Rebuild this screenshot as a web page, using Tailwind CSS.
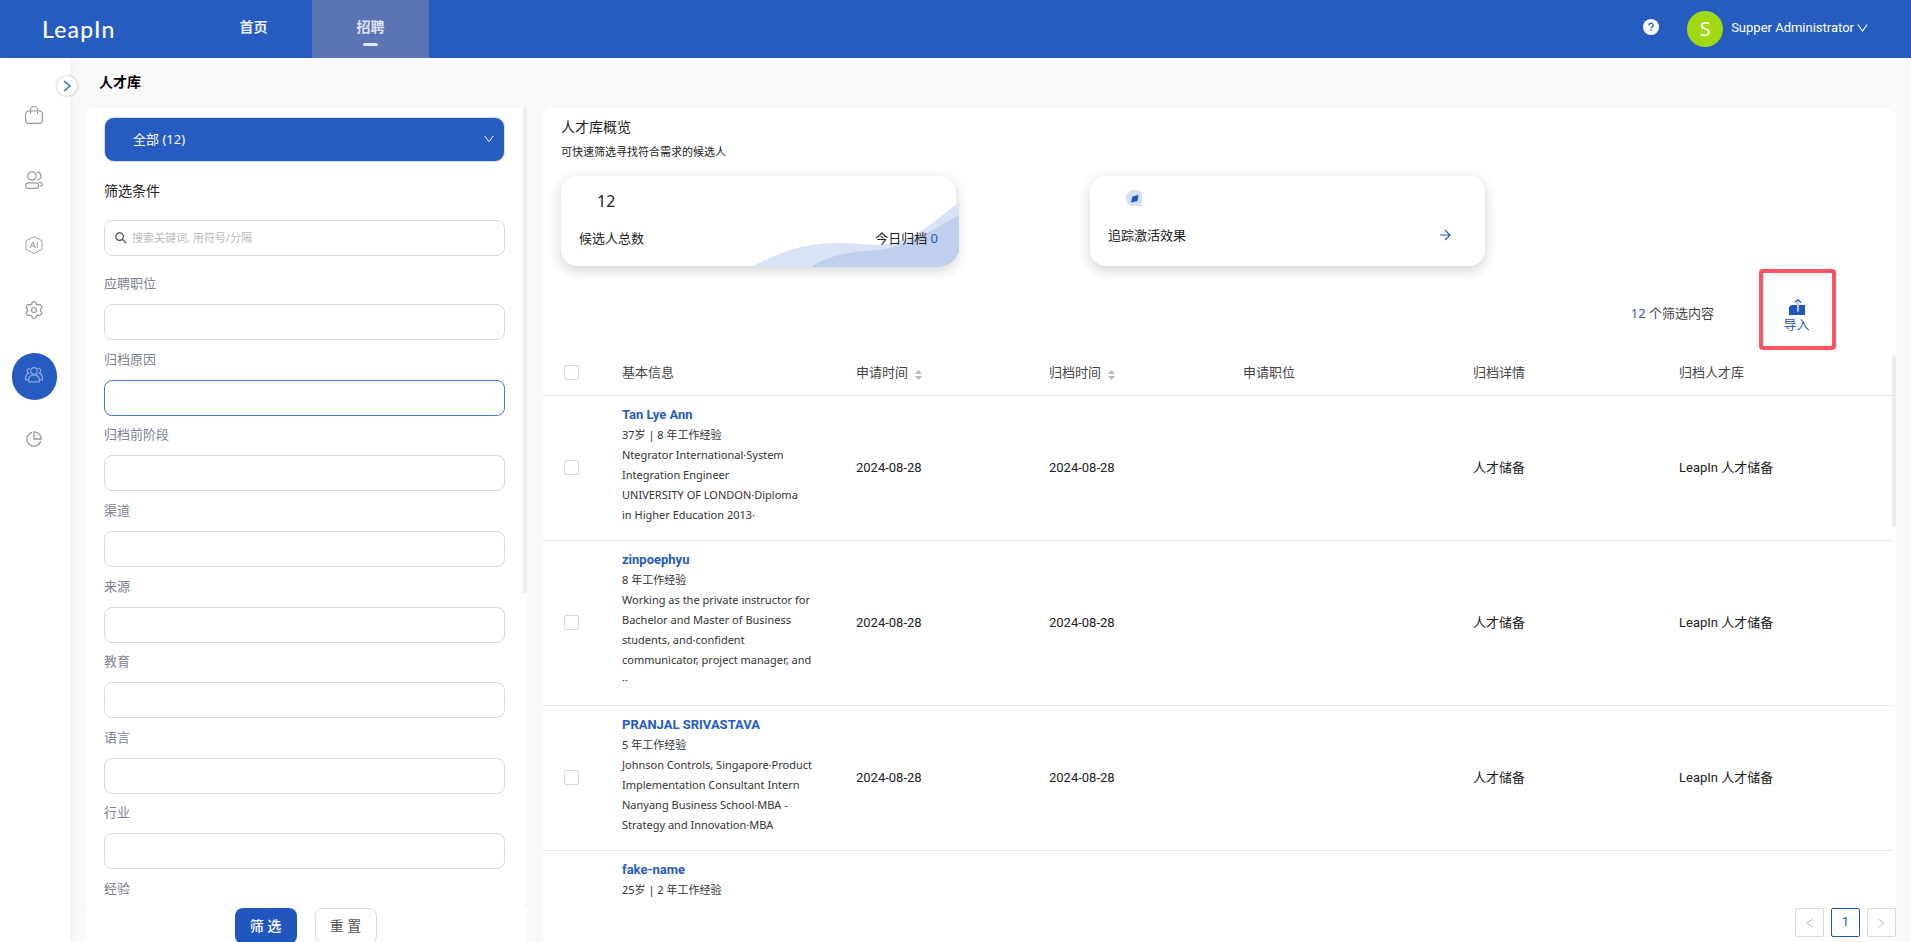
<!DOCTYPE html>
<html lang="zh-CN">
<head>
<meta charset="utf-8">
<title>LeapIn 人才库</title>
<script src="https://cdn.jsdelivr.net/npm/@tailwindcss/browser@4"></script>
</head>
<body class="flex h-screen flex-col overflow-hidden bg-[#f9f9f9] font-['Noto_Sans','Noto_Sans_CJK_SC',sans-serif] text-[13px] text-[#222]">

<header class="flex h-[58px] shrink-0 items-center bg-[#265bbf] text-white">
  <a href="#" class="w-[195px] pl-[42px] font-['Lato',sans-serif] text-[23px] leading-6 font-medium tracking-wider">LeapIn</a>
  <nav class="flex h-full">
    <a href="#" class="flex w-[117px] flex-col items-center pt-[17px] text-sm font-bold leading-5 text-white/90">首页</a>
    <a href="#" class="flex w-[117px] flex-col items-center bg-[#5c73b4] pt-[17px] text-sm font-bold leading-5 text-white/80">招聘
      <span class="mt-[6px] h-[3px] w-[15px] rounded-full bg-white/85"></span></a>
  </nav>
  <button type="button" aria-label="帮助" class="ml-auto mb-1">
    <svg class="size-4" viewBox="0 0 16 16"><circle cx="8" cy="8" r="8" fill="#fff"/><path d="M5.8 6.4a2.2 2.1 0 1 1 3.2 1.8c-.7.4-1 .7-1 1.4" fill="none" stroke="#265bbf" stroke-width="1.3"/><rect x="7.3" y="10.6" width="1.4" height="1.5" fill="#265bbf"/></svg>
  </button>
  <span class="ml-7 flex size-9 items-center justify-center rounded-full bg-[#a0d911] font-['Noto_Sans'] text-xl">S</span>
  <button type="button" class="mr-[43px] ml-2 mb-[3px] flex items-center gap-[3px] font-['Roboto',sans-serif] text-[13px]">Supper Administrator
    <svg class="h-2.5 w-[11px]" viewBox="0 0 11 10" fill="none" stroke="currentColor" stroke-width="1.1"><path d="M.8 1.5l4.7 6.5 4.7-6.5"/></svg></button>
</header>

<div class="flex min-h-0 flex-1">
  <aside class="relative w-[70px] shrink-0 bg-white pt-6 shadow-[2px_0_6px_rgba(0,0,0,0.04)]">
    <button type="button" aria-label="展开菜单" class="absolute top-[18px] right-[-7px] flex size-5 items-center justify-center rounded-full bg-white shadow-[0_0_3px_rgba(0,0,0,0.3)]">
      <svg class="h-3 w-2" viewBox="0 0 8 12" fill="none" stroke="#265bbf" stroke-width="1.2"><path d="M1 1l6 5-6 5"/></svg></button>
    <nav class="flex flex-col text-[#999]">
      <a href="#" aria-label="职位" class="flex h-[65px] items-center justify-center pr-0.5"><svg class="size-[18px]" viewBox="0 0 18 18" fill="none" stroke="currentColor" stroke-width="1.200"><rect x=".6" y="5" width="16.8" height="12.4" rx="3.2"/><path d="M5.5 8V4a3 3.2 0 0 1 7 0v4"/></svg></a>
      <a href="#" aria-label="候选人" class="flex h-[65px] items-center justify-center pr-0.5"><svg class="size-[18px]" viewBox="0 0 18 18" fill="none" stroke="currentColor" stroke-width="1.200"><circle cx="7" cy="5" r="4.2"/><path d="M12 1.2c2.2-.4 4 1.400 4 3.800 0 2.300-1.700 4-4 3.800"/><rect x=".6" y="11.800" width="13" height="5.600" rx="2.800"/><path d="M14 11.300c2-.1 3.400.7 3.400 2 0 1-.8 1.700-2 2"/></svg></a>
      <a href="#" aria-label="AI" class="flex h-[65px] items-center justify-center pr-0.5"><svg class="size-[18px]" viewBox="0 0 18 18" fill="none" stroke="currentColor"><path d="M9 .7l8 4v8.6l-8 4-8-4V4.700z" stroke-width=".9"/><path d="M5.400 12l2.300-6h.3l2.300 6M6.200 10h3.300M12.300 6v6"/></svg></a>
      <a href="#" aria-label="设置" class="flex h-[65px] items-center justify-center pr-0.5"><svg class="size-[18px]" viewBox="0 0 18 18" fill="none" stroke="currentColor" stroke-width="1.200" stroke-linejoin="round"><path d="M7.300 1.200Q9 .2 10.700 1.200L11.200 3Q12 3.700 13 3.900L14.800 3.500Q16.600 4.700 16.900 6.700L15.600 8Q15.300 9 15.600 10L16.900 11.300Q16.600 13.300 14.800 14.500L13 14.100Q12 14.300 11.200 15L10.700 16.800Q9 17.800 7.300 16.800L6.800 15Q6 14.300 5 14.100L3.200 14.500Q1.400 13.300 1.100 11.300L2.400 10Q2.700 9 2.400 8L1.100 6.700Q1.400 4.700 3.200 3.500L5 3.900Q6 3.700 6.800 3z"/><circle cx="9" cy="9" r="2.500"/></svg></a>
      <a href="#" aria-label="人才库" class="flex h-[65px] items-center justify-center pt-1 pr-0.5"><span class="flex h-[47px] w-[45px] items-center justify-center rounded-full bg-[#265bbf] pb-[3px] text-[#8ea9de]"><svg class="h-4 w-[18px]" viewBox="0 0 18 16" fill="none" stroke="currentColor" stroke-width="1.200"><circle cx="9" cy="4" r="3.300"/><path d="M3.800 14.800c-.8-4.500 1.400-7 5.200-7s6 2.500 5.200 7z"/><path d="M5.200 1.600c-2-.5-3.500 1-2.600 3.200.3 1 1 1.300 1 1.300-2.200.8-3.300 3-3 6.700h2.600M12.800 1.600c2-.5 3.500 1 2.600 3.200-.3 1-1 1.300-1 1.300 2.200.8 3.300 3 3 6.700h-2.600"/></svg></span></a>
      <a href="#" aria-label="报表" class="flex h-[65px] items-center justify-center pr-0.5 pb-0.5"><svg class="size-4" viewBox="0 0 16 16" fill="none" stroke="currentColor" stroke-width="1.300"><path d="M6 1.300A7 7 0 1 0 14.700 10"/><path d="M8 .8V8h7.200A7.200 7.200 0 0 0 8 .8z"/></svg></a>
    </nav>
  </aside>

  <main class="flex min-w-0 flex-1 flex-col pr-[15px] pl-4">
    <h1 class="h-[50px] shrink-0 pl-[13px] text-sm leading-[48px] font-bold text-black">人才库</h1>

    <div class="flex min-h-0 flex-1 gap-4">
      <form class="flex w-[441px] shrink-0 flex-col">
        <div class="relative flex min-h-0 flex-1 flex-col rounded-lg bg-white pt-[9px] pr-[22px] pl-[18px]">
          <div class="absolute top-0 right-0 h-[485px] w-1 bg-[#eee]"></div>
          <div class="relative">
            <select aria-label="人才库" class="block h-[45px] w-full appearance-none rounded-[10px] border border-[#d3def2] bg-[#265bbf] pl-7 text-white"><option>全部 (12)</option></select>
            <svg class="pointer-events-none absolute top-[18px] right-[11px] h-2 w-2.5" viewBox="0 0 10 8" fill="none" stroke="#fff"><path d="M.7 1l4.300 5.700L9.300 1"/></svg>
          </div>
          <h2 class="mt-[19px] text-sm leading-5">筛选条件</h2>
          <label class="mt-[19px] flex h-9 shrink-0 items-center gap-[5px] rounded-lg border border-[#d9d9d9] px-[10px]">
            <svg class="size-3" viewBox="0 0 12 12" fill="none" stroke="#444" stroke-width="1.200"><circle cx="4.600" cy="4.600" r="3.800"/><path d="M7.400 7.400l4 4"/></svg>
            <input type="text" aria-label="搜索" placeholder="搜索关键词, 用符号/分隔" class="flex-1 text-[11px] outline-none placeholder:text-[#bbb]">
          </label>
          <div class="mt-[17px] grid min-h-0 flex-1 auto-rows-fr text-[#7d8292]">
            <div><label for="f1" class="block leading-5">应聘职位</label><input id="f1" class="mt-[11px] block h-9 w-full rounded-lg border border-[#d9d9d9] px-3"></div>
            <div><label for="f2" class="block leading-5">归档原因</label><input id="f2" class="mt-[11px] block h-9 w-full rounded-lg border border-[#467bcc] px-3"></div>
            <div><label for="f3" class="block leading-5">归档前阶段</label><input id="f3" class="mt-[11px] block h-9 w-full rounded-lg border border-[#d9d9d9] px-3"></div>
            <div><label for="f4" class="block leading-5">渠道</label><input id="f4" class="mt-[11px] block h-9 w-full rounded-lg border border-[#d9d9d9] px-3"></div>
            <div><label for="f5" class="block leading-5">来源</label><input id="f5" class="mt-[11px] block h-9 w-full rounded-lg border border-[#d9d9d9] px-3"></div>
            <div><label for="f6" class="block leading-5">教育</label><input id="f6" class="mt-[11px] block h-9 w-full rounded-lg border border-[#d9d9d9] px-3"></div>
            <div><label for="f7" class="block leading-5">语言</label><input id="f7" class="mt-[11px] block h-9 w-full rounded-lg border border-[#d9d9d9] px-3"></div>
            <div><label for="f8" class="block leading-5">行业</label><input id="f8" class="mt-[11px] block h-9 w-full rounded-lg border border-[#d9d9d9] px-3"></div>
          </div>
          <div class="mb-[10px] leading-5 text-[#7d8292]">经验</div>
        </div>
        <div class="flex h-[34px] shrink-0 items-start justify-center gap-[18px] bg-white pr-0.5 text-sm">
          <button type="button" class="h-9 w-[62px] shrink-0 rounded-lg bg-[#2256bf] font-medium text-white">筛 选</button>
          <button type="button" class="h-9 w-[62px] shrink-0 rounded-lg border border-[#d9d9d9] text-[#555]">重 置</button>
        </div>
      </form>

      <section class="flex min-w-0 flex-1 flex-col rounded-t-lg bg-white pt-2 pb-[5px]">
        <div class="px-[18px]">
          <h2 class="text-sm leading-[22px]">人才库概览</h2>
          <p class="mt-1 text-[11px] leading-5">可快速筛选寻找符合需求的候选人</p>
          <div class="mt-[14px] flex gap-[134px]">
            <div class="relative h-[90px] w-[395px] rounded-2xl bg-white px-[18px] pt-[14px] shadow-[0_4px_14px_rgba(0,0,0,0.18)]">
              <svg class="absolute right-[-3px] bottom-[-1px] h-[66px] w-[213px]" viewBox="0 0 213 66"><path d="M6 66C34 50 60 42 91 42C110 42 124 45 143 43C168 38 184 24 213 1V50Q209 64 192 66z" fill="#dae3f5"/><path d="M65 66C85 53 106 51 130 49C160 47 180 32 213 14V50Q209 64 192 66z" fill="#c0cfed"/></svg>
              <p class="pl-[18px] text-base leading-[22px]">12</p>
              <p class="relative mt-4 flex justify-between leading-5"><span>候选人总数</span><span>今日归档 <span class="text-[#265bbf]">0</span></span></p>
            </div>
            <div class="h-[90px] w-[395px] rounded-2xl bg-white px-[18px] pt-[14px] shadow-[0_4px_14px_rgba(0,0,0,0.18)]">
              <svg class="ml-[18px] size-4" viewBox="0 0 16 16"><path d="M8 0Q13 0 16 3V16H4Q0 13 0 8A8 8 0 0 1 8 0z" fill="#d8e1f4"/><path d="M6.500 6.500L12.500 5 11.500 11 5 12.500z" fill="#2256bf"/></svg>
              <p class="mt-[19px] flex items-center justify-between pr-4 leading-5">追踪激活效果
                <svg class="h-3 w-[11px]" viewBox="0 0 11 12" fill="none" stroke="#265bbf" stroke-width="1.200"><path d="M0 6h10M5 1l5 5-5 5"/></svg></p>
            </div>
          </div>
        </div>

        <div class="mt-[3px] flex items-center justify-end gap-[45px] pr-[60px]">
          <p class="pt-2 text-[#444]"><span class="text-[#265bbf]">12</span> 个筛选内容</p>
          <button type="button" class="flex h-[81px] w-[77px] flex-col items-center rounded border-4 border-[#ff5361] pt-[26px] pr-0.5 text-[#265bbf]">
            <svg class="size-4 shrink-0" viewBox="0 0 16 16"><path d="M0 16V8l2.500-2H16v10z" fill="#2256bf"/><path d="M9 3v9.500" stroke="#b9caee" stroke-width="2"/><path d="M6 3.500L9 .8l3 2.700" stroke="#2256bf" stroke-width="1.400" fill="none"/></svg>
            <span class="leading-[18px]">导入</span>
          </button>
        </div>

        <div class="relative min-h-0 flex-1 overflow-hidden pr-1">
          <div class="absolute top-[5px] right-0 h-[172px] w-1 rounded-sm bg-[#ececec]"></div>
          <table class="w-full table-fixed text-left font-['Roboto','Noto_Sans_CJK_SC',sans-serif]">
            <colgroup><col class="w-[63px]"><col class="w-[234px]"><col class="w-[193px]"><col class="w-[194px]"><col class="w-[230px]"><col class="w-[206px]"><col></colgroup>
            <thead>
              <tr class="h-[45px] border-b border-[#e8e8e8] text-[#444]">
                <th class="pl-[21px]"><input type="checkbox" aria-label="全选" class="block size-[15px] appearance-none rounded-xs border border-[#d9d9d9]"></th>
                <th class="px-4 font-normal">基本信息</th>
                <th class="px-4 font-normal"><span class="flex items-center gap-[7px]">申请时间<svg class="mt-1.5 h-2.5 w-[7px]" viewBox="0 0 7 10" fill="#bbb"><path d="M3.500 0L7 4H0zM0 6h7L3.500 10z"/></svg></span></th>
                <th class="px-4 font-normal"><span class="flex items-center gap-[7px]">归档时间<svg class="mt-1.5 h-2.5 w-[7px]" viewBox="0 0 7 10" fill="#bbb"><path d="M3.500 0L7 4H0zM0 6h7L3.500 10z"/></svg></span></th>
                <th class="px-4 font-normal">申请职位</th>
                <th class="px-4 font-normal">归档详情</th>
                <th class="px-4 font-normal">归档人才库</th>
              </tr>
            </thead>
            <tbody>
              <tr class="border-b border-[#e8e8e8]">
                <td class="pl-[21px]"><input type="checkbox" aria-label="Tan Lye Ann" class="block size-[15px] appearance-none rounded-xs border border-[#d9d9d9]"></td>
                <td class="px-4 pt-[9px] pb-[15px] font-['Noto_Sans','Noto_Sans_CJK_SC',sans-serif] text-[11px] leading-5 whitespace-nowrap text-[#333]"><a href="#" class="block font-['Roboto',sans-serif] text-[13px] leading-5 font-bold text-[#265bbf]">Tan Lye Ann</a>37岁 | 8 年工作经验<br>Ntegrator International·System<br>Integration Engineer<br>UNIVERSITY OF LONDON·Diploma<br>in Higher Education 2013·</td>
                <td class="px-4">2024-08-28</td><td class="px-4">2024-08-28</td><td></td><td class="px-4">人才储备</td><td class="px-4">LeapIn 人才储备</td>
              </tr>
              <tr class="border-b border-[#e8e8e8]">
                <td class="pl-[21px]"><input type="checkbox" aria-label="zinpoephyu" class="block size-[15px] appearance-none rounded-xs border border-[#d9d9d9]"></td>
                <td class="px-4 pt-[9px] pb-[15px] font-['Noto_Sans','Noto_Sans_CJK_SC',sans-serif] text-[11px] leading-5 whitespace-nowrap text-[#333]"><a href="#" class="block font-['Roboto',sans-serif] text-[13px] leading-5 font-bold text-[#265bbf]">zinpoephyu</a>8 年工作经验<br>Working as the private instructor for<br>Bachelor and Master of Business<br>students, and·confident<br>communicator, project manager, and<br>··</td>
                <td class="px-4">2024-08-28</td><td class="px-4">2024-08-28</td><td></td><td class="px-4">人才储备</td><td class="px-4">LeapIn 人才储备</td>
              </tr>
              <tr class="border-b border-[#e8e8e8]">
                <td class="pl-[21px]"><input type="checkbox" aria-label="PRANJAL SRIVASTAVA" class="block size-[15px] appearance-none rounded-xs border border-[#d9d9d9]"></td>
                <td class="px-4 pt-[9px] pb-[15px] font-['Noto_Sans','Noto_Sans_CJK_SC',sans-serif] text-[11px] leading-5 whitespace-nowrap text-[#333]"><a href="#" class="block font-['Roboto',sans-serif] text-[13px] leading-5 font-bold text-[#265bbf]">PRANJAL SRIVASTAVA</a>5 年工作经验<br>Johnson Controls, Singapore·Product<br>Implementation Consultant Intern<br>Nanyang Business School·MBA -<br>Strategy and Innovation·MBA</td>
                <td class="px-4">2024-08-28</td><td class="px-4">2024-08-28</td><td></td><td class="px-4">人才储备</td><td class="px-4">LeapIn 人才储备</td>
              </tr>
              <tr class="h-[145px]">
                <td class="pl-[21px]"><input type="checkbox" aria-label="fake-name" class="block size-[15px] appearance-none rounded-xs border border-[#d9d9d9]"></td>
                <td class="px-4 pt-[9px] align-top font-['Noto_Sans','Noto_Sans_CJK_SC',sans-serif] text-[11px] leading-5 whitespace-nowrap text-[#333]"><a href="#" class="block font-['Roboto',sans-serif] text-[13px] leading-5 font-bold text-[#265bbf]">fake-name</a>25岁 | 2 年工作经验</td>
                <td></td><td></td><td></td><td></td><td></td>
              </tr>
            </tbody>
          </table>
        </div>

        <nav aria-label="分页" class="mt-2 flex justify-end gap-[7px]">
          <button type="button" aria-label="上一页" class="flex size-[29px] items-center justify-center rounded-xs border border-[#d9d9d9]"><svg class="h-2.5 w-[7px]" viewBox="0 0 7 10" fill="none" stroke="#bbb"><path d="M6.500 1L1 5l5.500 4"/></svg></button>
          <button type="button" class="size-[29px] rounded-xs border border-[#2256bf] pb-0.5 font-['Roboto',sans-serif] text-[13px] text-[#2256bf]">1</button>
          <button type="button" aria-label="下一页" class="flex size-[29px] items-center justify-center rounded-xs border border-[#d9d9d9]"><svg class="h-2.5 w-[7px]" viewBox="0 0 7 10" fill="none" stroke="#bbb"><path d="M.5 1L6 5 .5 9"/></svg></button>
        </nav>
      </section>
    </div>
  </main>
</div>
</body>
</html>
